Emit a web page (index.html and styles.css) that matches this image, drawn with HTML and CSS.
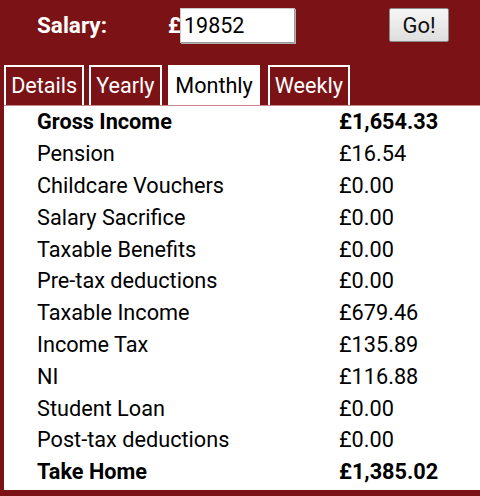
FILE: index.html
```html
<!DOCTYPE html>
<html>
<head>
<meta charset="utf-8">
<link rel="stylesheet" href="styles.css">
</head>
<body>
<div class="page">
  <div class="header">
    <span class="salary-label">Salary:</span>
    <span class="pound">£</span>
    <input class="salary-input" type="text" value="19852">
    <button class="go">Go!</button>
  </div>
  <div class="tabs">
    <div class="tab">Details</div>
    <div class="tab">Yearly</div>
    <div class="tab active">Monthly</div>
    <div class="tab">Weekly</div>
  </div>
  <div class="panel">
    <div class="row bold"><span class="label">Gross Income</span><span class="value">£1,654.33</span></div>
    <div class="row"><span class="label">Pension</span><span class="value">£16.54</span></div>
    <div class="row"><span class="label">Childcare Vouchers</span><span class="value">£0.00</span></div>
    <div class="row"><span class="label">Salary Sacrifice</span><span class="value">£0.00</span></div>
    <div class="row"><span class="label">Taxable Benefits</span><span class="value">£0.00</span></div>
    <div class="row"><span class="label">Pre-tax deductions</span><span class="value">£0.00</span></div>
    <div class="row"><span class="label">Taxable Income</span><span class="value">£679.46</span></div>
    <div class="row"><span class="label">Income Tax</span><span class="value">£135.89</span></div>
    <div class="row"><span class="label">NI</span><span class="value">£116.88</span></div>
    <div class="row"><span class="label">Student Loan</span><span class="value">£0.00</span></div>
    <div class="row"><span class="label">Post-tax deductions</span><span class="value">£0.00</span></div>
    <div class="row bold"><span class="label">Take Home</span><span class="value">£1,385.02</span></div>
  </div>
</div>
</body>
</html>
```
FILE: styles.css
```css
html, body {
  margin: 0;
  padding: 0;
  background: #7b1316;
  font-family: Roboto, "Liberation Sans", sans-serif;
}
.page {
  width: 480px;
  height: 496px;
  overflow: hidden;
}
.header {
  display: flex;
  align-items: center;
  height: 50px;
  padding-left: 37px;
}
.salary-label {
  color: #fff;
  font-weight: bold;
  font-size: 22.5px;
  width: 131px;
}
.pound {
  color: #fff;
  font-weight: bold;
  font-size: 22px;
  width: 12px;
}
.salary-input {
  box-sizing: border-box;
  width: 115px;
  height: 35px;
  margin: 0;
  padding: 0 3px;
  font-family: Roboto, sans-serif;
  font-size: 21.5px;
  color: #000;
  background: #fff;
  border: 1px solid #c8c8c8;
  border-right-color: #9a9a9a;
  border-bottom-color: #9a9a9a;
  box-shadow: 1px 1px 0 #b0b0b0;
  outline: none;
}
.go {
  box-sizing: border-box;
  margin-left: 94px;
  width: 60px;
  height: 34px;
  padding: 0;
  font-family: Roboto, sans-serif;
  font-size: 22px;
  color: #111;
  background: linear-gradient(#f6f6f6, #dedede);
  border: 1px solid #8a8a8a;
  border-radius: 2px;
}
.tabs {
  display: flex;
  gap: 4.5px;
  margin-top: 15px;
  padding-left: 4px;
  height: 40px;
}
.tab {
  box-sizing: border-box;
  height: 40px;
  border: 2px solid #fff;
  border-bottom: none;
  padding: 4px 5.2px 0;
  color: #fff;
  font-size: 21.6px;
  line-height: 30px;
}
.tab.active {
  background: #fff;
  color: #000;
  margin-left: 2px;
  margin-right: 3px;
}
.panel {
  margin-left: 4px;
  background: #fff;
  height: 385px;
  box-sizing: border-box;
  padding-top: 0;
  border-top: 1px solid #c88;
}
.row {
  display: flex;
  height: 31.8px;
  align-items: center;
  font-size: 21.7px;
  color: #000;
}
.row.bold {
  font-weight: bold;
}
.label {
  padding-left: 33px;
  width: 302px;
}
```
